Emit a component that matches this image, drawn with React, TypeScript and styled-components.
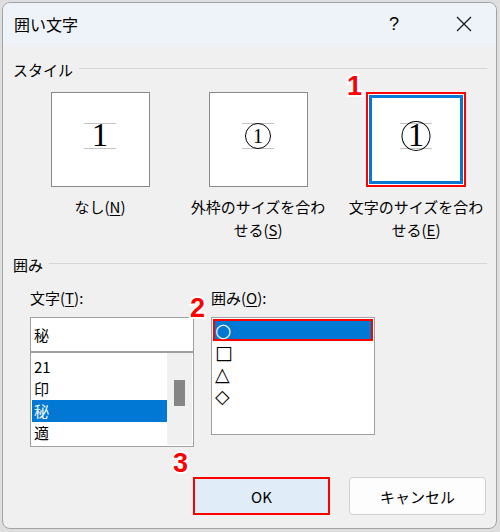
import React from "react";
import styled, { createGlobalStyle, css } from "styled-components";

const Global = createGlobalStyle`
  html, body { margin: 0; padding: 0; }
  body {
    background: #dedede;
    font-family: "Noto Sans CJK JP", "Noto Sans", sans-serif;
  }
`;

const Screen = styled.div`
  width: 500px;
  height: 532px;
  padding: 2px 0 0 2px;
  box-sizing: border-box;
  background: #dedede;
`;

const Dialog = styled.div`
  position: relative;
  width: 495px;
  height: 527px;
  box-sizing: border-box;
  border: 1px solid #a3a3a3;
  border-radius: 8px;
  overflow: hidden;
  background: #f0f0f0;
  display: flex;
  flex-direction: column;
  font-size: 15px;
  color: #000;
`;

const TitleBar = styled.div`
  height: 42px;
  flex: none;
  background: #eef2f9;
  display: flex;
  align-items: center;
  padding: 0 9px 0 11px;
`;

const Title = styled.div`
  flex: 1;
  font-size: 16px;
  line-height: 20px;
`;

const TitleButton = styled.div<{ $w?: number }>`
  width: ${(p) => p.$w ?? 46}px;
  height: 42px;
  display: flex;
  align-items: center;
  justify-content: center;
  font-family: "Liberation Sans", sans-serif;
  font-size: 18px;
`;

const Body = styled.div`
  flex: 1;
  display: flex;
  flex-direction: column;
  padding: 0 9px 0 10px;
`;

const GroupHeader = styled.div<{ $top: number }>`
  display: flex;
  align-items: center;
  gap: 6px;
  margin-top: ${(p) => p.$top}px;
  line-height: 20px;
  font-size: 15px;
  &::after {
    content: "";
    flex: 1;
    height: 1px;
    background: #d6d6d6;
    margin-top: -3px;
  }
`;

const Options = styled.div`
  display: grid;
  grid-template-columns: repeat(3, 158px);
  margin: 12px 0 0 8px;
`;

const Option = styled.div`
  display: flex;
  flex-direction: column;
  align-items: center;
`;

const PreviewBox = styled.div<{ $selected?: boolean }>`
  width: 99px;
  height: 95px;
  box-sizing: border-box;
  background: #fff;
  border: 1px solid #8a8a8a;
  display: flex;
  align-items: center;
  justify-content: center;
  ${(p) =>
    p.$selected &&
    css`
      width: 100px;
      border: 2px solid #ff0000;
      box-shadow: inset 0 0 0 1px #fff, inset 0 0 0 4px #0078d4;
    `}
`;

const Guide = styled.div`
  position: relative;
  width: 32px;
  height: 24px;
  border-top: 1px solid #c4c4c4;
  border-bottom: 1px solid #c4c4c4;
  display: flex;
  align-items: center;
  justify-content: center;
  margin-top: -8px;
`;

const Digit = styled.span<{ $size: number }>`
  font-family: "Liberation Serif", serif;
  font-size: ${(p) => p.$size}px;
  line-height: 1;
  position: relative;
`;

const Circle = styled.div<{ $w: number; $h: number }>`
  position: absolute;
  left: 50%;
  top: 50%;
  width: ${(p) => p.$w}px;
  height: ${(p) => p.$h}px;
  transform: translate(-50%, -50%);
  border: 1px solid #000;
  border-radius: 50%;
  box-sizing: border-box;
`;

const OptionLabel = styled.div`
  margin-top: 8px;
  text-align: center;
  line-height: 23px;
  font-size: 15px;
  white-space: nowrap;
`;

const U = styled.span`
  text-decoration: underline;
  text-underline-offset: 2px;
`;

const Columns = styled.div`
  display: flex;
  gap: 17px;
  margin: 13px 0 0 17px;
`;

const Column = styled.div`
  width: 164px;
  display: flex;
  flex-direction: column;
`;

const FieldLabel = styled.div`
  line-height: 20px;
  font-size: 15px;
  margin-bottom: 9px;
`;

const TextInput = styled.div`
  height: 35px;
  box-sizing: border-box;
  border: 1px solid #a0a0a0;
  background: #fff;
  display: flex;
  align-items: center;
  padding-left: 3px;
  font-size: 15px;
`;

const ListBox = styled.div<{ $h: number }>`
  height: ${(p) => p.$h}px;
  box-sizing: border-box;
  border: 1px solid #a0a0a0;
  background: #fff;
  display: flex;
  padding: 1px;
`;

const Items = styled.div<{ $pad?: number }>`
  flex: 1;
  display: flex;
  flex-direction: column;
  padding-top: ${(p) => p.$pad ?? 0}px;
`;

const Item = styled.div<{ $selected?: boolean; $marked?: boolean }>`
  height: 22px;
  line-height: 22px;
  padding-left: 2px;
  font-size: 15px;
  box-sizing: border-box;
  ${(p) =>
    p.$selected &&
    css`
      background: #0078d4;
      color: #fff;
    `}
  ${(p) =>
    p.$marked &&
    css`
      border: 2px solid #ff0000;
      line-height: 18px;
      padding-left: 0;
    `}
`;

const ShapeItem = styled(Item)`
  font-family: "DejaVu Sans", sans-serif;
  font-size: 19px;
`;

const ScrollTrack = styled.div`
  width: 25px;
  margin-top: -1px;
  background: #f0f0f0;
  display: flex;
  justify-content: center;
  padding-top: 27px;
  box-sizing: border-box;
`;

const Thumb = styled.div`
  width: 11px;
  height: 26px;
  background: #858585;
`;

const Buttons = styled.div`
  display: flex;
  justify-content: flex-end;
  gap: 19px;
  margin-top: 30px;
  padding-right: 1px;
`;

const Button = styled.div<{ $primary?: boolean }>`
  width: 137px;
  height: 38px;
  box-sizing: border-box;
  display: flex;
  align-items: center;
  justify-content: center;
  font-size: 15px;
  border-radius: 4px;
  background: #fdfdfd;
  border: 1px solid #d0d0d0;
  ${(p) =>
    p.$primary &&
    css`
      border-radius: 0;
      background: #e0ecf8;
      border: 2px solid #ff0000;
    `}
`;

const Badge = styled.div<{ $x: number; $y: number }>`
  position: absolute;
  left: ${(p) => p.$x}px;
  top: ${(p) => p.$y}px;
  font-family: "Liberation Sans", sans-serif;
  font-weight: bold;
  font-size: 27px;
  line-height: 1;
  color: #ff0000;
  -webkit-text-stroke: 4px #fff;
  paint-order: stroke fill;
`;

const CloseIcon = () => (
  <svg width="16" height="16" viewBox="0 0 16 16">
    <path d="M1 1 L15 15 M15 1 L1 15" stroke="#1a1a1a" strokeWidth="1.3" fill="none" />
  </svg>
);

export default function App() {
  return (
    <Screen>
      <Global />
      <Dialog>
        <TitleBar>
          <Title>囲い文字</Title>
          <TitleButton>?</TitleButton>
          <TitleButton $w={24} />
          <TitleButton>
            <CloseIcon />
          </TitleButton>
        </TitleBar>
        <Body>
          <GroupHeader $top={15}>スタイル</GroupHeader>
          <Options>
            <Option>
              <PreviewBox>
                <Guide>
                  <Digit $size={33}>1</Digit>
                </Guide>
              </PreviewBox>
              <OptionLabel>
                なし(<U>N</U>)
              </OptionLabel>
            </Option>
            <Option>
              <PreviewBox>
                <Guide>
                  <Circle $w={26} $h={26} />
                  <Digit $size={20}>1</Digit>
                </Guide>
              </PreviewBox>
              <OptionLabel>
                外枠のサイズを合わ
                <br />
                せる(<U>S</U>)
              </OptionLabel>
            </Option>
            <Option>
              <PreviewBox $selected>
                <Guide>
                  <Circle $w={29} $h={30} />
                  <Digit $size={33}>1</Digit>
                </Guide>
              </PreviewBox>
              <OptionLabel>
                文字のサイズを合わ
                <br />
                せる(<U>E</U>)
              </OptionLabel>
            </Option>
          </Options>
          <GroupHeader $top={14}>囲み</GroupHeader>
          <Columns>
            <Column>
              <FieldLabel>
                文字(<U>T</U>):
              </FieldLabel>
              <TextInput>秘</TextInput>
              <ListBox $h={95}>
                <Items $pad={2}>
                  <Item>21</Item>
                  <Item>印</Item>
                  <Item $selected>秘</Item>
                  <Item>適</Item>
                </Items>
                <ScrollTrack>
                  <Thumb />
                </ScrollTrack>
              </ListBox>
            </Column>
            <Column>
              <FieldLabel>
                囲み(<U>O</U>):
              </FieldLabel>
              <ListBox $h={118}>
                <Items>
                  <ShapeItem $selected $marked>○</ShapeItem>
                  <ShapeItem>□</ShapeItem>
                  <ShapeItem>△</ShapeItem>
                  <ShapeItem>◇</ShapeItem>
                </Items>
              </ListBox>
            </Column>
          </Columns>
          <Buttons>
            <Button $primary>OK</Button>
            <Button>キャンセル</Button>
          </Buttons>
        </Body>
        <Badge $x={344} $y={70}>1</Badge>
        <Badge $x={187} $y={292}>2</Badge>
        <Badge $x={170} $y={447}>3</Badge>
      </Dialog>
    </Screen>
  );
}
